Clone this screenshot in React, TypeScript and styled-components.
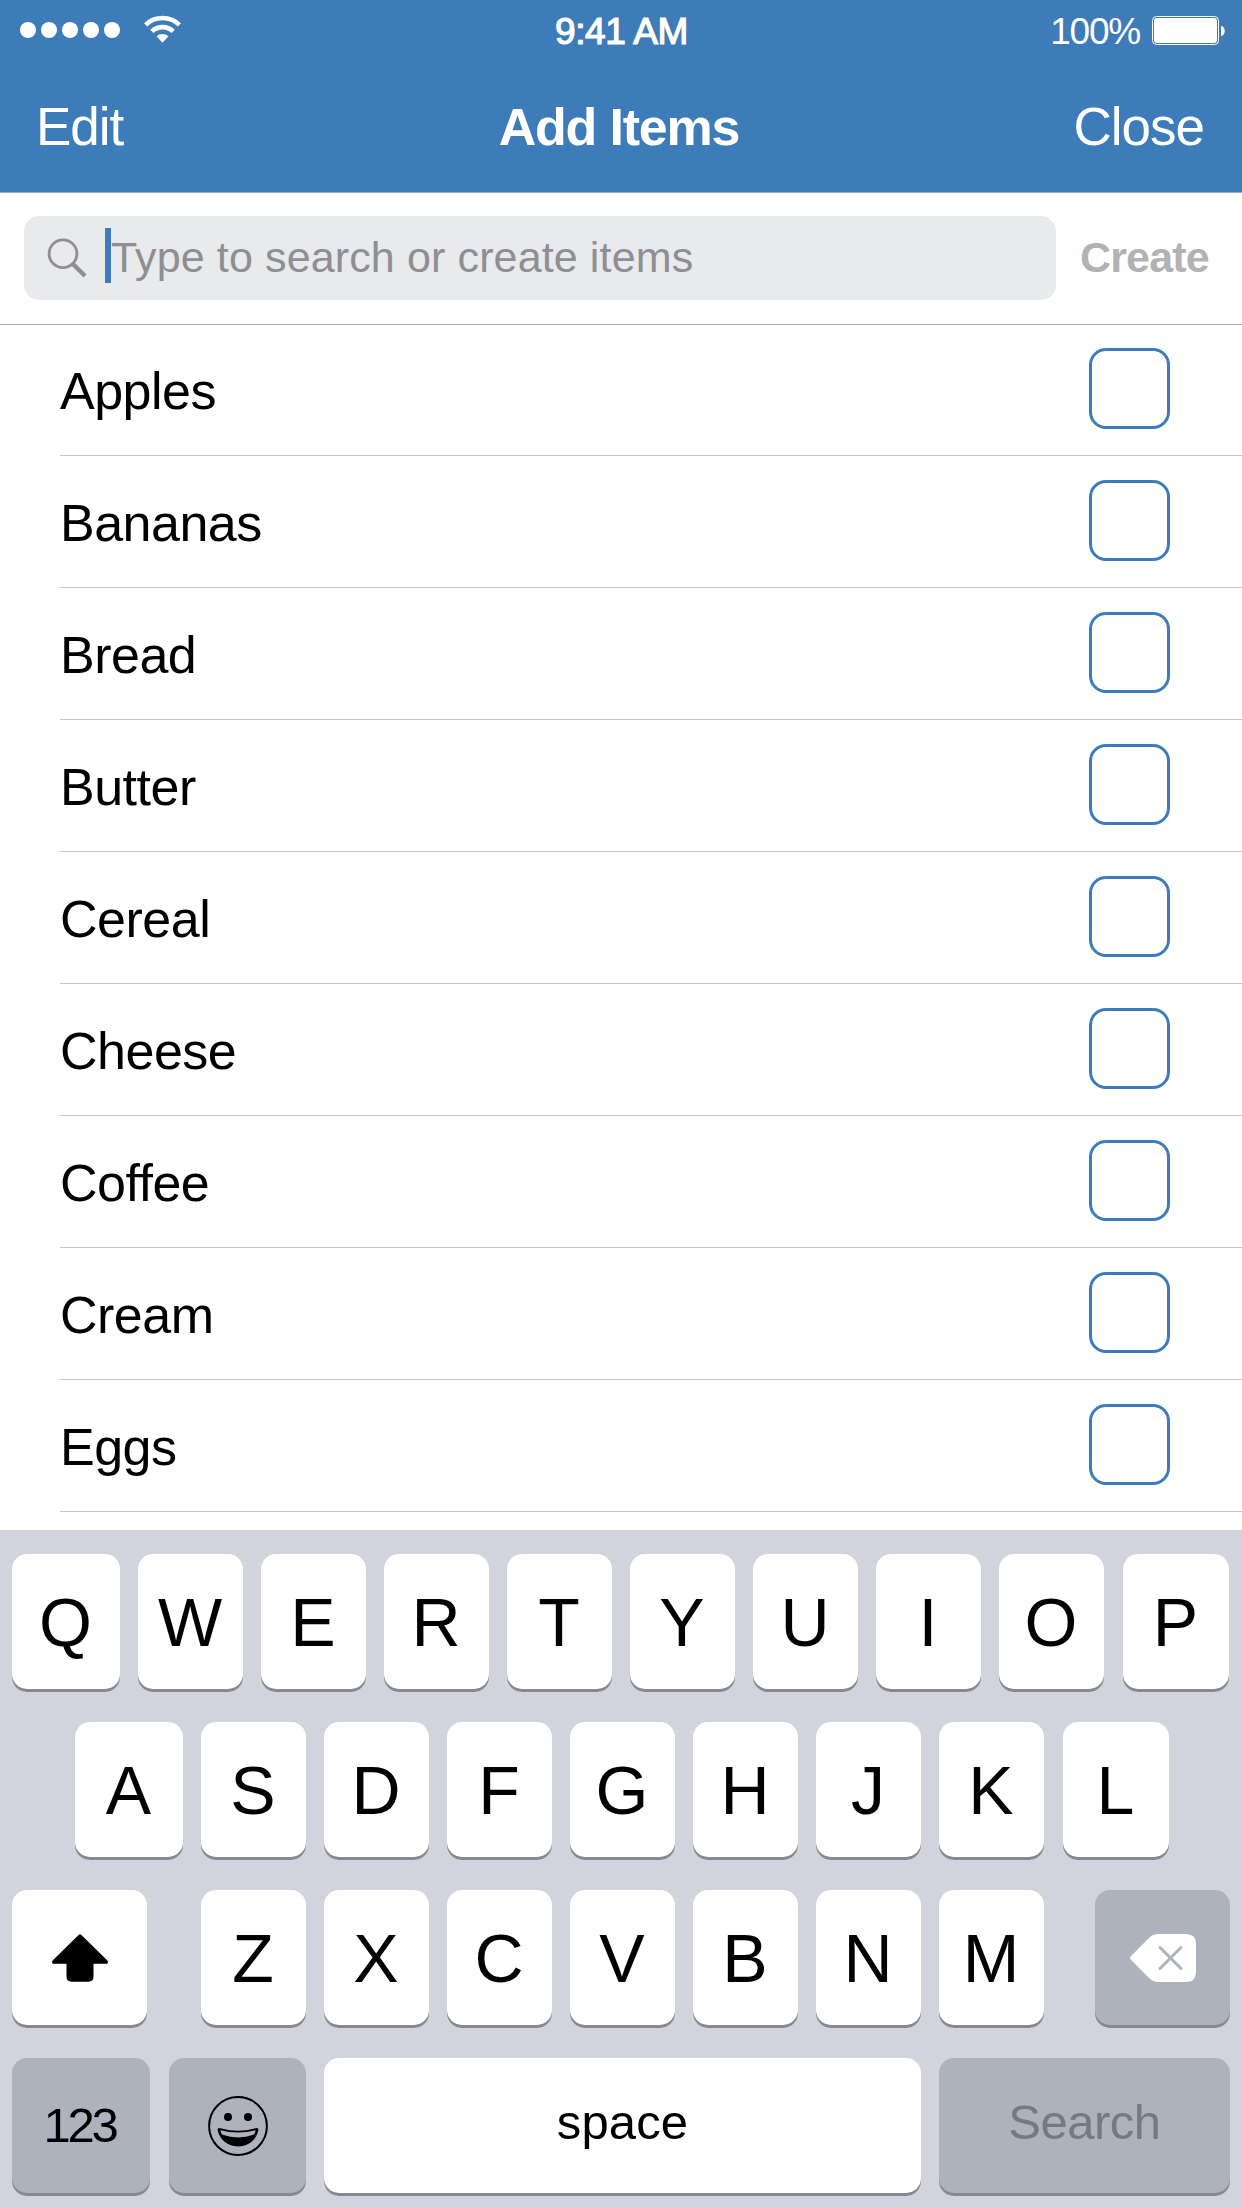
import React from 'react';
import styled, { createGlobalStyle } from 'styled-components';

const BLUE = '#3d7cb9';

const GlobalStyle = createGlobalStyle`
  *, *::before, *::after { box-sizing: border-box; }
  html, body { margin: 0; padding: 0; }
  body { background: #fff; }
`;

const Screen = styled.main`
  width: 1242px;
  height: 2208px;
  display: flex;
  flex-direction: column;
  overflow: hidden;
  background: #fff;
  color: #000;
  font-family: 'Liberation Sans', Arial, Helvetica, sans-serif;
  white-space: nowrap;
`;

const Header = styled.header`
  height: 193px;
  flex: none;
  background: ${BLUE};
  border-bottom: 1px solid #a5a8b2;
  color: #fff;
`;

const StatusBar = styled.div`
  height: 60px;
  display: grid;
  grid-template-columns: 1fr auto 1fr;
  padding: 0 17px 0 20px;
`;

const StatusLeft = styled.div`
  display: flex;
  gap: 24px;
  align-items: flex-start;
`;

const Dots = styled.div`
  display: flex;
  gap: 5px;
  padding-top: 22px;
`;

const Dot = styled.span`
  width: 16px;
  height: 16px;
  border-radius: 50%;
  background: #fff;
`;

const WifiIcon = styled.svg`
  width: 37px;
  height: 28px;
  margin-top: 15px;
`;

const Clock = styled.time`
  padding: 11px 2px 0 0;
  font-size: 37px;
  line-height: 42px;
  letter-spacing: -0.4px;
  -webkit-text-stroke: 1.2px #fff;
`;

const StatusRight = styled.div`
  display: flex;
  justify-content: flex-end;
  gap: 12px;
`;

const Percent = styled.span`
  padding-top: 11px;
  font-size: 37px;
  line-height: 42px;
  letter-spacing: -1.2px;
`;

const BatteryIcon = styled.svg`
  width: 73px;
  height: 29px;
  margin-top: 16px;
`;

const NavBar = styled.nav`
  height: 132px;
  display: grid;
  grid-template-columns: 1fr auto 1fr;
  align-items: center;
  padding: 2px 38px 0 36px;
`;

const NavButton = styled.button<{ $end?: boolean }>`
  justify-self: ${(p) => (p.$end ? 'end' : 'start')};
  padding: 0;
  border: 0;
  background: none;
  color: #fff;
  font: 53px/60px 'Liberation Sans', Arial, sans-serif;
  letter-spacing: -1px;
`;

const Title = styled.h1`
  margin: 0;
  padding-right: 2px;
  font-size: 52px;
  line-height: 60px;
  letter-spacing: -1.2px;
`;

const SearchBar = styled.div`
  height: 132px;
  flex: none;
  display: flex;
  align-items: center;
  gap: 24px;
  padding: 0 0 1px 24px;
  border-bottom: 1px solid #a9a9ac;
`;

const SearchField = styled.label`
  width: 1032px;
  height: 84px;
  flex: none;
  display: flex;
  align-items: center;
  padding-left: 23px;
  border-radius: 15px;
  background: #e9eaec;
`;

const LensIcon = styled.svg`
  width: 42px;
  height: 42px;
`;

const Caret = styled.span`
  width: 6px;
  height: 55px;
  margin: -5px 0 0 16px;
  background: ${BLUE};
`;

const Placeholder = styled.span`
  padding-bottom: 3px;
  color: #8e8e93;
  font-size: 43px;
  line-height: 50px;
  letter-spacing: 0.13px;
`;

const CreateButton = styled.button`
  padding: 0 0 3px;
  border: 0;
  background: none;
  color: #b2b2b2;
  font: bold 43px/50px 'Liberation Sans', Arial, sans-serif;
  letter-spacing: -0.85px;
`;

const List = styled.ul`
  height: 1205px;
  flex: none;
  margin: 0;
  padding: 0 0 0 60px;
  list-style: none;
`;

const Item = styled.li`
  height: 132px;
  display: flex;
  align-items: flex-start;
  justify-content: space-between;
  padding: 24px 72px 0 0;
  border-bottom: 1px solid #c8c7cc;

  &:first-child {
    height: 131px;
    padding-top: 23px;
  }
`;

const ItemName = styled.span`
  padding-top: 13px;
  font-size: 52px;
  line-height: 60px;
  letter-spacing: -0.5px;
`;

const Checkbox = styled.span`
  width: 81px;
  height: 81px;
  border: 3px solid ${BLUE};
  border-radius: 17px;
  background: #fff;
`;

const Keyboard = styled.section`
  flex: 1;
  display: flex;
  flex-direction: column;
  gap: 33px;
  padding: 24px 12px 0;
  background: #d1d4dc;
`;

const KeyRow = styled.div<{ $inset?: number }>`
  display: flex;
  gap: 18px;
  padding: 0 ${(p) => p.$inset ?? 0}px;
`;

const KeyCap = styled.button<{ $w?: number; $dark?: boolean; $before?: number }>`
  width: ${(p) => p.$w ?? 105}px;
  height: 135px;
  flex: none;
  display: flex;
  align-items: center;
  justify-content: center;
  margin: 0 0 0 ${(p) => p.$before ?? 0}px;
  padding: 0;
  border: 0;
  border-radius: 15px;
  background: ${(p) => (p.$dark ? '#adb2bd' : '#fff')};
  box-shadow: 0 3px 0 #88898d;
  color: #000;
  font: 68px/78px 'Liberation Sans', Arial, sans-serif;
`;

const LetterKey = styled(KeyCap)`
  padding-right: 1px;
`;

const KeyWord = styled.span<{ $muted?: boolean; $track?: number }>`
  padding-bottom: 8px;
  color: ${(p) => (p.$muted ? '#757984' : '#000')};
  font-size: 49px;
  line-height: 56px;
  letter-spacing: ${(p) => p.$track ?? 0}px;
`;

const KeyDigits = styled(KeyWord)`
  padding: 0 3px 1px 0;
`;

const ShiftIcon = styled.svg`
  width: 56px;
  height: 48px;
`;

const DeleteIcon = styled.svg`
  width: 66px;
  height: 48px;
`;

const SmileIcon = styled.svg`
  width: 60px;
  height: 60px;
`;

const items = ['Apples', 'Bananas', 'Bread', 'Butter', 'Cereal', 'Cheese', 'Coffee', 'Cream', 'Eggs'];

const keyWidth = (letter: string) => {
  if (letter === 'Q' || letter === 'A') return 108;
  if (letter === 'P' || letter === 'L') return 106;
  return 105;
};

const Letters = ({ row }: { row: string }) => (
  <>
    {row.split('').map((letter) => (
      <LetterKey key={letter} $w={keyWidth(letter)} $before={letter === 'P' || letter === 'L' ? 1 : 0}>
        {letter}
      </LetterKey>
    ))}
  </>
);

export default function App() {
  return (
    <Screen>
      <GlobalStyle />
      <Header>
        <StatusBar>
          <StatusLeft>
            <Dots>
              {[0, 1, 2, 3, 4].map((n) => (
                <Dot key={n} />
              ))}
            </Dots>
            <WifiIcon viewBox="0 0 37 28" fill="none" stroke="#fff" strokeWidth="4.6">
              <path d="M1.6 9.8 A24.5 24.5 0 0 1 35.4 9.8" />
              <path d="M7.8 16.4 A15.6 15.6 0 0 1 29.2 16.4" />
              <path d="M12.5 21.3 A9 9 0 0 1 24.5 21.3 L18.5 27.7 Z" fill="#fff" stroke="none" />
            </WifiIcon>
          </StatusLeft>
          <Clock>9:41 AM</Clock>
          <StatusRight>
            <Percent>100%</Percent>
            <BatteryIcon viewBox="0 0 73 29">
              <rect x="0.5" y="0.5" width="66" height="28" rx="4" fill="none" stroke="#fff" strokeWidth="1" />
              <rect x="2" y="2" width="63" height="25" rx="3" fill="#fff" />
              <path d="M69 10 C74 10.5 74 19.5 69 20 Z" fill="#fff" />
            </BatteryIcon>
          </StatusRight>
        </StatusBar>
        <NavBar>
          <NavButton>Edit</NavButton>
          <Title>Add Items</Title>
          <NavButton $end>Close</NavButton>
        </NavBar>
      </Header>
      <SearchBar>
        <SearchField>
          <LensIcon viewBox="0 0 42 42" fill="none" stroke="#8e8e93">
            <circle cx="16" cy="16.7" r="13.9" strokeWidth="2.8" />
            <path d="M26 27 L38 39" strokeWidth="4.4" />
          </LensIcon>
          <Caret />
          <Placeholder>Type to search or create items</Placeholder>
        </SearchField>
        <CreateButton>Create</CreateButton>
      </SearchBar>
      <List>
        {items.map((name) => (
          <Item key={name}>
            <ItemName>{name}</ItemName>
            <Checkbox role="checkbox" aria-checked={false} />
          </Item>
        ))}
      </List>
      <Keyboard>
        <KeyRow>
          <Letters row="QWERTYUIOP" />
        </KeyRow>
        <KeyRow $inset={63}>
          <Letters row="ASDFGHJKL" />
        </KeyRow>
        <KeyRow>
          <KeyCap $w={135} aria-label="Shift">
            <ShiftIcon viewBox="0 0 56 48">
              <path d="M26.6 0.9 Q28 -0.3 29.4 0.9 L55.4 26.6 Q57 29.7 54 29.7 H41.5 V42.5 Q41.5 47.7 36.3 47.7 H19.7 Q14.5 47.7 14.5 42.5 V29.7 H2 Q-1 29.7 0.6 26.6 Z" />
            </ShiftIcon>
          </KeyCap>
          <LetterKey $before={36}>Z</LetterKey>
          <Letters row="XCVBNM" />
          <KeyCap $w={135} $dark $before={33} aria-label="Delete">
            <DeleteIcon viewBox="0 0 66 48">
              <path
                d="M0.9 22.2 L19 4 Q23 0 28 0 H56 Q66 0 66 10 V38 Q66 48 56 48 H28 Q23 48 19 44 L0.9 25.8 Q-0.6 24 0.9 22.2 Z"
                fill="#fff"
              />
              <path d="M30 13.5 L51 34.5 M51 13.5 L30 34.5" stroke="#adb2bd" strokeWidth="3" strokeLinecap="round" />
            </DeleteIcon>
          </KeyCap>
        </KeyRow>
        <KeyRow>
          <KeyCap $w={138} $dark>
            <KeyDigits $track={-3.2}>123</KeyDigits>
          </KeyCap>
          <KeyCap $w={137} $dark $before={1} aria-label="Emoji">
            <SmileIcon viewBox="0 0 60 60">
              <circle cx="30" cy="30" r="28.9" fill="none" stroke="#000" strokeWidth="2" />
              <circle cx="20" cy="21" r="4" />
              <circle cx="40" cy="21" r="4" />
              <path
                d="M12.5 32.2 Q30 37.5 47.5 32.2 Q50.7 31.5 50.4 34 C48.4 44 40 50.4 30 50.4 C20 50.4 11.6 44 9.6 34 Q9.3 31.5 12.5 32.2 Z"
              />
              <path d="M12.4 34.2 Q30 39 47.6 34.2 Q47.4 37 45.4 38.8 Q30 44 14.6 38.8 Q12.6 37 12.4 34.2 Z" fill="#adb2bd" />
            </SmileIcon>
          </KeyCap>
          <KeyCap $w={597}>
            <KeyWord $track={0.1}>space</KeyWord>
          </KeyCap>
          <KeyCap $w={291} $dark>
            <KeyWord $muted $track={-0.5}>Search</KeyWord>
          </KeyCap>
        </KeyRow>
      </Keyboard>
    </Screen>
  );
}
